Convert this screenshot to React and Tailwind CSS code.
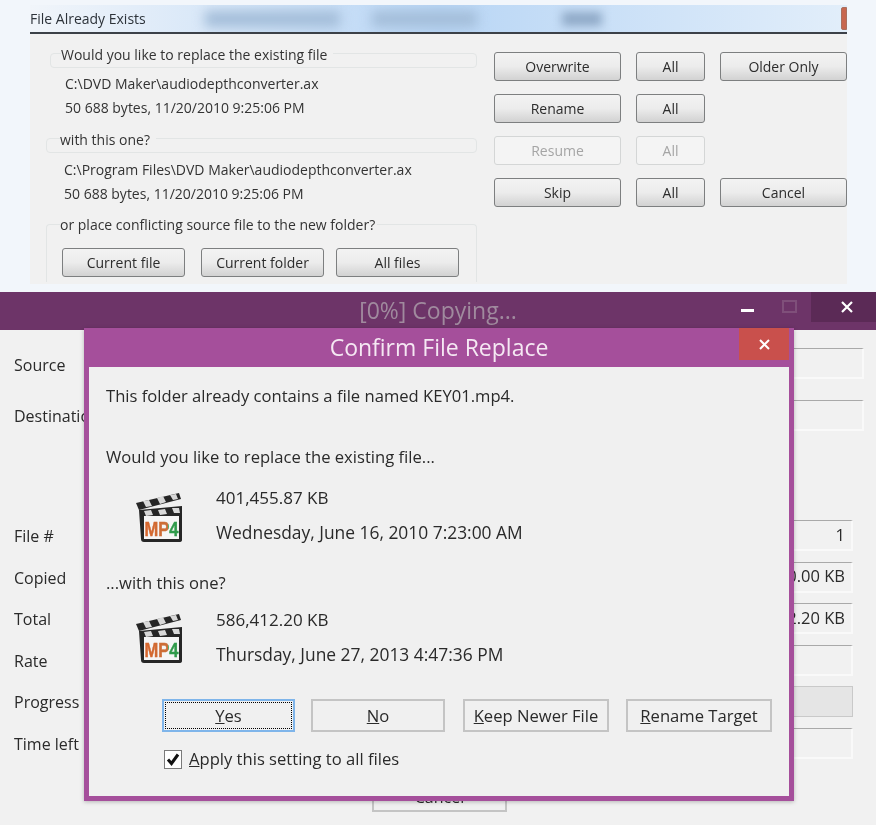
import React from "react";

const OldButton = ({ children, className = "", disabled = false }) => (
  <button
    className={`h-[29px] rounded-[3px] border text-[14px] ${
      disabled
        ? "border-[#d4d6d6] bg-[#f4f4f4] text-[#a5a5a5]"
        : "border-[#7d7f80] bg-gradient-to-b from-[#f3f3f3] via-[#ececec] to-[#d2d2d2] text-[#2c2c2c]"
    } ${className}`}
  >
    {children}
  </button>
);

const GroupLine = ({ text, className = "" }) => (
  <div className={`h-[15px] rounded-sm border border-[#e2e5e5] ${className}`}>
    <span className="relative -top-[12px] inline-block bg-[#f1f1f1] pr-[6px] text-[14px] leading-[20px] text-[#333]">
      {text}
    </span>
  </div>
);

const FlatButton = ({ children, className = "" }) => (
  <button
    className={`h-[33px] border-2 border-[#c4c4c4] bg-[#f0f0f0] text-[16.6px] text-[#2a2a2a] ${className}`}
  >
    {children}
  </button>
);

const Field = ({ label, value, gray = false, labelClass = "pt-[1px]" }) => (
  <div className="flex h-[31px] items-center justify-between">
    <span className={`text-[16px] text-[#2a2a2a] ${labelClass}`}>{label}</span>
    <div
      className={`flex h-full w-[340px] items-center justify-end pr-[6px] text-[16.5px] text-[#2a2a2a] ${
        gray
          ? "border border-[#c9c9c9] bg-[#e5e5e5]"
          : "border-t border-t-[#a9a9a9] border-x-2 border-b-2 border-x-[#f9f9f9] border-b-[#f9f9f9]"
      }`}
    >
      {value}
    </div>
  </div>
);

const Mp4Icon = ({ id }) => (
  <svg width="50" height="52" viewBox="0 0 50 52" className="shrink-0">
    <defs>
      <linearGradient id={id} gradientUnits="userSpaceOnUse" x1="9" y1="0" x2="44" y2="0">
        <stop offset="0" stopColor="#d9652b" />
        <stop offset="0.7" stopColor="#c9703a" />
        <stop offset="0.7" stopColor="#2f9a4a" />
        <stop offset="1" stopColor="#2f9a4a" />
      </linearGradient>
    </defs>
    <path d="M1 11 L44 1 L46 7 L4 18 Z" fill="#262626" />
    <path d="M8 9 L14 8 L17 14 L11 15 Z M22 6 L28 4 L31 10 L25 12 Z M35 3 L41 2 L43 7 L38 8 Z" fill="#d8d8d8" />
    <path d="M4 18 L47 14 L47 48 Q47 50 44 50 L9 50 Q6 50 6 47 Z" fill="#262626" />
    <path d="M9 19 L16 18 L18 23 L11 24 Z M23 18 L30 17 L32 22 L25 23 Z M37 16 L44 16 L45 21 L39 21 Z" fill="#d8d8d8" />
    <rect x="9" y="24" width="35" height="23" fill="#f5f5f5" />
    <text
      x="9.5"
      y="35.2"
      transform="scale(1 1.25)"
      fontFamily="Liberation Sans, sans-serif"
      fontSize="16.5"
      fontWeight="700"
      fill={`url(#${id})`}
      stroke={`url(#${id})`}
      strokeWidth="0.4"
    >
      MP4
    </text>
  </svg>
);

const App = () => {
  return (
    <div className="flex h-[825px] w-[876px] flex-col overflow-hidden bg-[#f2f6fb] font-['Open_Sans',sans-serif] blur-[0.4px]">
      {/* old style dialog */}
      <div className="h-[292px] shrink-0 pl-[30px] pr-[29px] pt-[5px]">
        <div className="flex h-[29px] items-center overflow-hidden border-b-2 border-b-[#3c4148] bg-gradient-to-r from-[#f1f5fa] via-[#b9d6f5] to-[#e2eefa]">
          <span className="w-[140px] shrink-0 text-[14px] text-[#2d333a]">File Already Exists</span>
          <div className="ml-[35px] h-[16px] w-[135px] shrink-0 bg-[#a3bdd9] blur-[6px]"></div>
          <div className="ml-[32px] h-[16px] w-[105px] shrink-0 bg-[#a3bdd9] blur-[6px]"></div>
          <div className="ml-[85px] h-[14px] w-[40px] shrink-0 bg-[#8fa9c7] blur-[5px]"></div>
          <div className="ml-auto h-[23px] w-[6px] shrink-0 rounded-l-[2px] border border-[#a9705f] bg-[#c8674f]"></div>
        </div>
        <div className="flex h-[250px] bg-[#f1f1f1]">
          <div className="w-[447px] shrink-0 pt-[19px]">
            <GroupLine text="Would you like to replace the existing file" className="ml-[20px] pl-[10px]" />
            <div className="ml-[35px] mt-[4px] text-[14px] leading-[24px] text-[#333]">
              <div>C:\DVD Maker\audiodepthconverter.ax</div>
              <div>50 688 bytes, 11/20/2010 9:25:06 PM</div>
            </div>
            <GroupLine text="with this one?" className="ml-[16px] mt-[18px] pl-[13px]" />
            <div className="ml-[34px] mt-[5px] text-[14px] leading-[24px] text-[#333]">
              <div>C:\Program Files\DVD Maker\audiodepthconverter.ax</div>
              <div>50 688 bytes, 11/20/2010 9:25:06 PM</div>
            </div>
            <div className="ml-[16px] mt-[18px] h-[58px] rounded-t-sm border-x border-t border-[#e2e5e5] pl-[13px]">
              <span className="relative -top-[13px] inline-block bg-[#f1f1f1] pr-[2px] text-[14px] leading-[20px] text-[#333]">
                or place conflicting source file to the new folder?
              </span>
              <div className="-mt-[1px] ml-[2px] flex gap-[16px]">
                <OldButton className="w-[123px]">Current file</OldButton>
                <OldButton className="w-[123px]">Current folder</OldButton>
                <OldButton className="-ml-[4px] w-[123px]">All files</OldButton>
              </div>
            </div>
          </div>
          <div className="ml-[17px] grid grid-cols-[127px_69px_127px] content-start gap-x-[15px] gap-y-[13px] pt-[18px]">
            <OldButton>Overwrite</OldButton>
            <OldButton>All</OldButton>
            <OldButton>Older Only</OldButton>
            <OldButton>Rename</OldButton>
            <OldButton>All</OldButton>
            <div></div>
            <OldButton disabled>Resume</OldButton>
            <OldButton disabled>All</OldButton>
            <div></div>
            <OldButton>Skip</OldButton>
            <OldButton>All</OldButton>
            <OldButton>Cancel</OldButton>
          </div>
        </div>
      </div>

      {/* copy window */}
      <div className="relative flex-1 bg-[#f1f1f1]">
        <div className="grid h-[38px] grid-cols-[1fr_auto_1fr] bg-[#6d3468]">
          <div></div>
          <div className="pt-[1px] text-[23px] leading-[34px] text-[#a08a9e]">[0%] Copying...</div>
          <div className="flex justify-end">
            <div className="mr-[28px] mt-[17px] h-[3px] w-[13px] bg-white"></div>
            <div className="mr-[14px] mt-[8px] h-[13px] w-[15px] border-2 border-[#7f4f7a]"></div>
            <div className="flex h-[30px] w-[65px] items-center justify-center bg-[#5b2a56] pl-[7px]">
              <svg width="14" height="14" viewBox="0 0 14 14">
                <path d="M2 2 L12 12 M12 2 L2 12" stroke="#fff" strokeWidth="2.2" />
              </svg>
            </div>
          </div>
        </div>

        <div className="pl-[14px]">
          <div className="mt-[18px] flex flex-col gap-[21px] pr-[12px]">
            <Field label="Source" value="" labelClass="pt-[3px]" />
            <Field label="Destination" value="" />
          </div>
          <div className="mt-[89px] flex flex-col gap-[10.5px] pr-[23px]">
            <Field label="File #" value="1" />
            <Field label="Copied" value="0.00 KB" />
            <Field label="Total" value="586,412.20 KB" />
            <Field label="Rate" value="" />
            <Field label="Progress" value="" gray />
            <Field label="Time left" value="" />
          </div>
          <button className="ml-[358px] mt-[24px] h-[29px] w-[135px] border-2 border-[#c4c4c4] bg-[#f0f0f0] text-[16px] text-[#2a2a2a]">
            Cancel
          </button>
        </div>

        {/* confirm dialog on top of the copy window */}
        <div className="absolute left-[84px] top-[36px] w-[710px] border-x-[5px] border-b-[5px] border-[#a54f9b] shadow-[0_1px_4px_rgba(0,0,0,0.25)]">
          <div className="relative flex h-[39px] items-center justify-center bg-[#a54f9b] text-[23px] text-[#f5e8f3]">
            Confirm File Replace
            <div className="absolute right-0 top-0 flex h-[32px] w-[50px] items-center justify-center bg-[#c9504c]">
              <svg width="13" height="13" viewBox="0 0 13 13">
                <path d="M2 2 L11 11 M11 2 L2 11" stroke="#fff" strokeWidth="2" />
              </svg>
            </div>
          </div>
          <div className="h-[429px] bg-[#f0f0f0] pl-[17px] pt-[18px] text-[16.6px] leading-[22px] text-[#2a2a2a]">
            <div>This folder already contains a file named KEY01.mp4.</div>
            <div className="mt-[39px]">Would you like to replace the existing file...</div>
            <div className="ml-[29px] mt-[19px] flex gap-[31px]">
              <div className="mt-[5px]">
                <Mp4Icon id="mp4-a" />
              </div>
              <div>
                <div className="text-[17px]">401,455.87 KB</div>
                <div className="mt-[12px] text-[17.4px]">Wednesday, June 16, 2010 7:23:00 AM</div>
              </div>
            </div>
            <div className="mt-[28px]">...with this one?</div>
            <div className="ml-[29px] mt-[15px] flex gap-[31px]">
              <div className="mt-[4px]">
                <Mp4Icon id="mp4-b" />
              </div>
              <div>
                <div className="text-[17px]">586,412.20 KB</div>
                <div className="mt-[12px] text-[17.4px]">Thursday, June 27, 2013 4:47:36 PM</div>
              </div>
            </div>
            <div className="ml-[56px] mt-[34px] flex">
              <button className="h-[33px] w-[133px] border-2 border-[#7fb5ea] bg-[#f0f0f0] p-[1px] text-[16.6px]">
                <span className="flex h-full items-center justify-center border border-dotted border-black">
                  <u>Y</u>es
                </span>
              </button>
              <FlatButton className="ml-[16px] w-[134px]">
                <u>N</u>o
              </FlatButton>
              <FlatButton className="ml-[18px] w-[146px]">
                <u>K</u>eep Newer File
              </FlatButton>
              <FlatButton className="ml-[17px] w-[146px]">
                <u>R</u>ename Target
              </FlatButton>
            </div>
            <div className="ml-[58px] mt-[17px] flex h-[20px] items-center gap-[7px]">
              <div className="flex h-[19px] w-[18px] items-center justify-center border border-[#7a7a7a] bg-white">
                <svg width="14" height="14" viewBox="0 0 14 14">
                  <path d="M2 7.5 L5.5 11.5 L12 2.5" fill="none" stroke="#111" strokeWidth="3" />
                </svg>
              </div>
              <span>
                <u>A</u>pply this setting to all files
              </span>
            </div>
          </div>
        </div>
      </div>
    </div>
  );
};

export default App;
